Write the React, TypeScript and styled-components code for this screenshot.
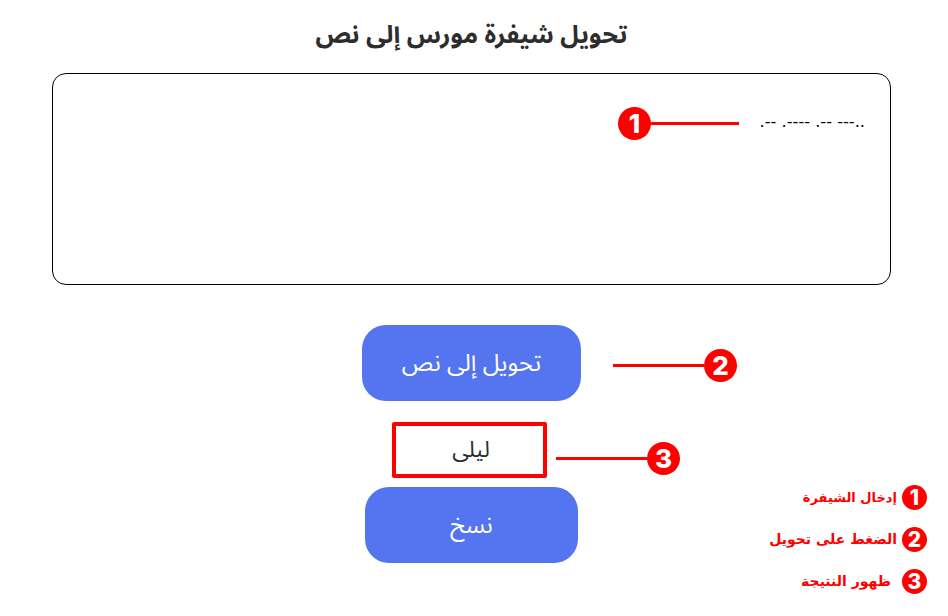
import { createGlobalStyle, styled } from "styled-components";

const GlobalStyle = createGlobalStyle`
  html, body {
    margin: 0;
    padding: 0;
    background: #fff;
    font-family: "Noto Sans Arabic", "DejaVu Sans", sans-serif;
  }
`;

const Page = styled.div`
  position: relative;
  width: 948px;
  height: 616px;
  overflow: hidden;
`;

const Main = styled.main`
  display: flex;
  flex-direction: column;
  align-items: center;
  width: 839px;
  margin-left: 52px;
  padding-top: 19px;
`;

const Title = styled.h1`
  margin: 0 0 21px;
  font-size: 25px;
  line-height: 33px;
  font-weight: 700;
  color: #2d2d2d;
`;

const MorseInput = styled.textarea`
  box-sizing: border-box;
  display: block;
  width: 839px;
  height: 212px;
  padding: 38px 25px;
  border: 1px solid #000;
  border-radius: 14px;
  outline: none;
  resize: none;
  background: #fff;
  color: #000;
  direction: ltr;
  text-align: right;
  font-family: "DejaVu Sans", sans-serif;
  font-size: 16.2px;
  line-height: 20px;
`;

const ActionButton = styled.button<{ $width: number; $mt: number }>`
  display: block;
  width: ${(p) => p.$width}px;
  height: 76px;
  margin-top: ${(p) => p.$mt}px;
  border: 0;
  border-radius: 24px;
  background: #5474f0;
  color: #fff;
  font-family: "Noto Sans Arabic", sans-serif;
  font-size: 24px;
`;

const Result = styled.div`
  box-sizing: border-box;
  width: 155px;
  height: 56px;
  margin: 21px 5px 9px 0;
  padding-left: 4px;
  display: flex;
  align-items: center;
  justify-content: center;
  border: 4px solid #f00;
  border-radius: 2px;
  color: #2d2d2d;
  font-size: 22.5px;
`;

const Callout = styled.div<{ $x: number; $y: number }>`
  position: absolute;
  left: ${(p) => p.$x}px;
  top: ${(p) => p.$y}px;
  display: flex;
  align-items: center;
`;

const Line = styled.span<{ $width: number }>`
  display: block;
  width: ${(p) => p.$width}px;
  height: 3px;
  background: #f00;
`;

const Badge = styled.span<{ $size: number; $font: number }>`
  display: flex;
  align-items: center;
  justify-content: center;
  flex: none;
  width: ${(p) => p.$size}px;
  height: ${(p) => p.$size}px;
  border-radius: 50%;
  background: #f00;
  color: #fff;
  font-family: Inter, sans-serif;
  font-weight: 800;
  font-size: ${(p) => p.$font}px;
  line-height: 1;
`;

const Legend = styled.ol`
  position: absolute;
  right: 21px;
  top: 483px;
  margin: 0;
  padding: 0;
  list-style: none;
  display: flex;
  flex-direction: column;
  gap: 14px;
`;

const LegendItem = styled.li<{ $gap: number; $font: number }>`
  display: flex;
  align-items: center;
  justify-content: flex-end;
  gap: ${(p) => p.$gap}px;
  height: 28px;
  color: #f00;
  font-family: "DejaVu Sans", sans-serif;
  font-size: ${(p) => p.$font}px;
  font-weight: 700;
`;

const steps = [
  { n: 1, label: "إدخال الشيفرة", gap: 5, font: 13 },
  { n: 2, label: "الضغط على تحويل", gap: 5, font: 14 },
  { n: 3, label: "ظهور النتيجة", gap: 11, font: 14 },
];

export default function App() {
  return (
    <Page>
      <GlobalStyle />
      <Main dir="rtl">
        <Title>تحويل شيفرة مورس إلى نص</Title>
        <MorseInput readOnly value=".-- .---- .-- ---.." />
        <ActionButton $width={219} $mt={40}>تحويل إلى نص</ActionButton>
        <Result>ليلى</Result>
        <ActionButton $width={213} $mt={0}>نسخ</ActionButton>
      </Main>

      <Callout $x={618} $y={107}>
        <Badge $size={33} $font={26}>1</Badge>
        <Line $width={88} />
      </Callout>
      <Callout $x={613} $y={349}>
        <Line $width={91} />
        <Badge $size={33} $font={26}>2</Badge>
      </Callout>
      <Callout $x={556} $y={442}>
        <Line $width={91} />
        <Badge $size={33} $font={26}>3</Badge>
      </Callout>

      <Legend>
        {steps.map((s) => (
          <LegendItem key={s.n} $gap={s.gap} $font={s.font}>
            <span>{s.label}</span>
            <Badge $size={25} $font={21}>{s.n}</Badge>
          </LegendItem>
        ))}
      </Legend>
    </Page>
  );
}
